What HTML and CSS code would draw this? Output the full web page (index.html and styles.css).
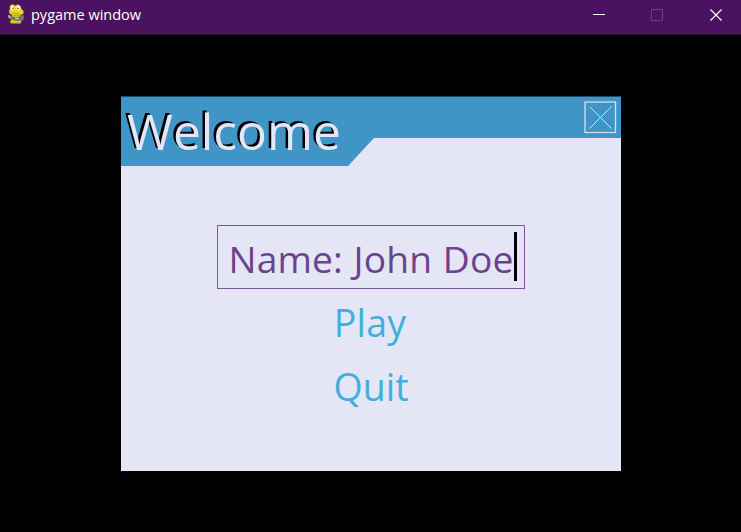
FILE: index.html
```html
<!DOCTYPE html>
<html lang="en">
<head>
<meta charset="utf-8">
<title>pygame window</title>
<link rel="stylesheet" href="styles.css">
</head>
<body>
<header class="titlebar">
  <svg class="app-icon" width="18" height="21" viewBox="0 0 18 21">
    <path d="M5 10h8l1.500 3v4L13.500 19.500H4L3 17.500 4.500 15Z" fill="#dcc81c"/>
    <path d="M3 1.500 5.500.3 8 1.500 10.500.5 13 1.500 14 4.500 16.500 7 16.500 9.500 14 11 5 11 2.500 9.500 2 7 3 5Z" fill="#ecd71c" stroke="#8d7b25" stroke-width=".5"/>
    <ellipse cx="5.300" cy="3.900" rx="1.900" ry="2.300" fill="#f4f4f4"/>
    <ellipse cx="11.500" cy="3.900" rx="2" ry="2.300" fill="#f4f4f4"/>
    <circle cx="6" cy="4.300" r=".7" fill="#333"/>
    <circle cx="11" cy="4.500" r=".7" fill="#333"/>
    <path d="M4.500 9.300h8.500" stroke="#b39b16" stroke-width=".7"/>
    <path d="M1 11 4 11.500 7 13 11 13 14 11.500 16.500 11 17.300 13.500 16 16.500 11 17 6 16 1 14Z" fill="#77706e"/>
    <path d="M1.500 11.500l2 2.500M8 14.500h4" stroke="#c4c0c2" stroke-width="1.300"/>
  </svg>
  <span class="caption">pygame window</span>
  <svg class="controls" width="174" height="34" viewBox="0 0 174 34" fill="none">
    <path d="M26 14.500h12" stroke="#fff"/>
    <rect x="84.500" y="9.500" width="11" height="11" stroke="#6b3d81"/>
    <path d="M143.500 9.500l11 11M154.500 9.500l-11 11" stroke="#fff" stroke-width="1.200"/>
  </svg>
</header>
<main class="stage">
  <section class="menu">
    <div class="menu-header">
      <h1 class="menu-title">Welcome</h1>
      <svg class="close" width="33" height="33" viewBox="0 0 33 33" fill="none" stroke="#cfe0f0">
        <rect x="1" y="1" width="30.500" height="30.500" stroke-width="1.300"/>
        <path d="M5.500 5.500l22 22M27.500 5.500l-22 22" stroke-width="1"/>
      </svg>
    </div>
    <div class="widgets">
      <div class="field"><span class="name">Name: John Doe</span><i class="cursor"></i></div>
      <div class="option play">Play</div>
      <div class="option quit">Quit</div>
    </div>
  </section>
</main>
</body>
</html>
```
FILE: styles.css
```css
* { box-sizing: border-box; }
body {
  margin: 0;
  height: 532px;
  background: #000;
  overflow: hidden;
  font-family: "Open Sans", sans-serif;
}
.titlebar {
  display: flex;
  align-items: flex-start;
  height: 35px;
  padding-left: 7px;
  background: #4a1260;
  border-bottom: 1px solid #211e22;
}
.app-icon { margin-top: 4px; }
.caption {
  flex: 1;
  margin-left: 6px;
  color: #fff;
  font-size: 14.500px;
  line-height: 30px;
  white-space: nowrap;
}
.stage { padding: 61px 0 0 121px; }
.menu {
  width: 500px;
  height: 375px;
  background: #e4e6f6;
  border-top: 1px solid #1f4a62;
}
.menu-header {
  display: flex;
  justify-content: space-between;
  height: 69px;
  padding: 4px 4px 0 6px;
  background: #3f95c5;
  clip-path: polygon(0 0, 100% 0, 100% 41px, 253px 41px, 227px 100%, 0 100%);
}
.menu-title {
  margin: -5px 0 0;
  color: #e4e6f6;
  font-size: 49.700px;
  font-weight: 400;
  line-height: 70px;
  text-shadow: -2.500px -2px 0 #000;
}
.widgets {
  display: flex;
  flex-direction: column;
  align-items: center;
  padding-top: 59px;
}
.field {
  display: flex;
  width: 308px;
  height: 64px;
  padding: 6px 0 0 10.500px;
  border: 1px solid #7d55a0;
  color: #6b438c;
}
.name, .option {
  font-size: 37.500px;
  line-height: 54px;
  white-space: nowrap;
}
.name {
  width: 285px;
  font-size: 37.200px;
  letter-spacing: 0.150px;
  word-spacing: 0.800px;
}
.cursor {
  width: 3px;
  height: 49px;
  background: #000;
}
.option {
  height: 64px;
  padding-top: 7px;
  color: #43aedd;
}
.play {
  margin-right: 2px;
  letter-spacing: 0.200px;
}
```
